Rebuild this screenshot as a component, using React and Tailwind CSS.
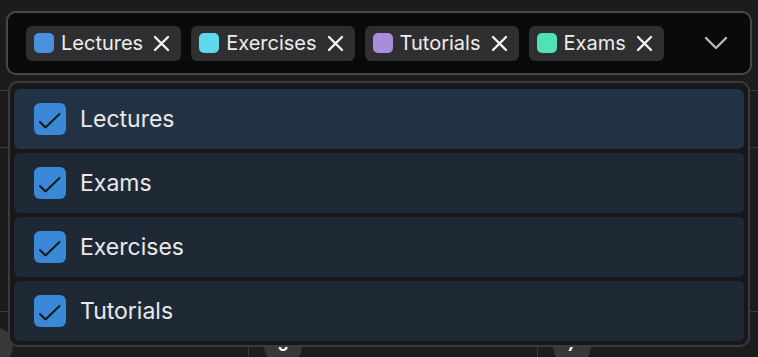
import React, { useState } from "react";

const categories = [
  { id: "lectures", label: "Lectures", color: "bg-[#4a90da]" },
  { id: "exercises", label: "Exercises", color: "bg-[#5fd9ec]" },
  { id: "tutorials", label: "Tutorials", color: "bg-[#a98ddd]" },
  { id: "exams", label: "Exams", color: "bg-[#50e1b7]" },
];

const menuOrder = ["lectures", "exams", "exercises", "tutorials"];

function XIcon() {
  return (
    <svg width="17" height="17" viewBox="0 0 17 17" fill="none" stroke="#f4f4f4" strokeWidth="2.4" strokeLinecap="round">
      <path d="M2 2 15 15M15 2 2 15" />
    </svg>
  );
}

function Chip({ cat, onRemove }) {
  return (
    <div className="flex h-[35px] items-center rounded-[6px] bg-[#2f2f31] pl-[8px] pr-[11px]">
      <span className={`h-[20px] w-[20px] rounded-[5px] ${cat.color}`} />
      <span className="ml-[7px] text-[20px] leading-none text-[#ededed]">{cat.label}</span>
      <button className="ml-[10px] flex items-center" onClick={onRemove}>
        <XIcon />
      </button>
    </div>
  );
}

function MenuItem({ label, checked, active, onToggle }) {
  return (
    <div
      onClick={onToggle}
      className={`flex h-[60px] items-center rounded-[6px] pl-[20px] ${active ? "bg-[#233345]" : "bg-[#1f2936]"}`}
    >
      <span className="flex h-[32px] w-[32px] items-center justify-center rounded-[6px] bg-[#3b88d6]">
        {checked && (
          <svg width="32" height="32" viewBox="0 0 32 32" fill="none" stroke="#15191f" strokeWidth="2" strokeLinecap="round" strokeLinejoin="round">
            <polyline points="6,19 11.5,24.5 25.5,11" />
          </svg>
        )}
      </span>
      <span className="ml-[14px] text-[23px] leading-none text-[#e9e9ea]">{label}</span>
    </div>
  );
}

function DayCell({ day }) {
  return (
    <div className="h-full w-[289px] shrink-0 border-l border-[#3a3a3c] pl-[15px] pt-[15px]">
      <span className="flex h-[38px] w-[38px] items-center justify-center rounded-full bg-[#38383a] text-[17px] font-semibold text-white">
        {day}
      </span>
    </div>
  );
}

export default function App() {
  const [selected, setSelected] = useState(categories.map((c) => c.id));

  const toggle = (id) =>
    setSelected((s) => (s.includes(id) ? s.filter((x) => x !== id) : [...s, id]));

  return (
    <div
      className="relative h-[357px] w-[758px] overflow-hidden bg-[#1c1c1d]"
      style={{ fontFamily: "Inter, 'Noto Sans', sans-serif" }}
    >
      <div className="px-[6px] pt-[11px]">
        <div className="flex h-[64px] items-center rounded-[10px] border-2 border-[#48484b] bg-[#0a0a0b] pl-[18px] pr-[22px]">
          <div className="flex flex-1 items-center gap-[10px]">
            {categories
              .filter((c) => selected.includes(c.id))
              .map((c) => (
                <Chip key={c.id} cat={c} onRemove={() => toggle(c.id)} />
              ))}
          </div>
          <svg width="24" height="15" viewBox="0 0 24 15" fill="none" stroke="#b9b9bc" strokeWidth="2.4" strokeLinecap="round" strokeLinejoin="round">
            <polyline points="2,2 12,12 22,2" />
          </svg>
        </div>
      </div>

      {/* calendar behind the open menu */}
      <div className="mt-[15px] border-t border-[#3a3a3c]">
        <div className="h-[57px] border-b border-[#3a3a3c]" />
        <div className="h-[164px] border-b border-[#3a3a3c]" />
        <div className="ml-[-41px] flex h-[60px]">
          <DayCell day="" />
          <DayCell day="6" />
          <DayCell day="7" />
        </div>
      </div>

      <div className="absolute left-[8px] top-[81px] w-[742px] rounded-[10px] border-2 border-[#3b3b3e] bg-[#18181a] px-[4px] pb-[4px] pt-[6px]">
        <div className="flex flex-col gap-[4px]">
          {menuOrder.map((id, i) => {
            const cat = categories.find((c) => c.id === id);
            return (
              <MenuItem
                key={id}
                label={cat.label}
                checked={selected.includes(id)}
                active={i === 0}
                onToggle={() => toggle(id)}
              />
            );
          })}
        </div>
      </div>
    </div>
  );
}
